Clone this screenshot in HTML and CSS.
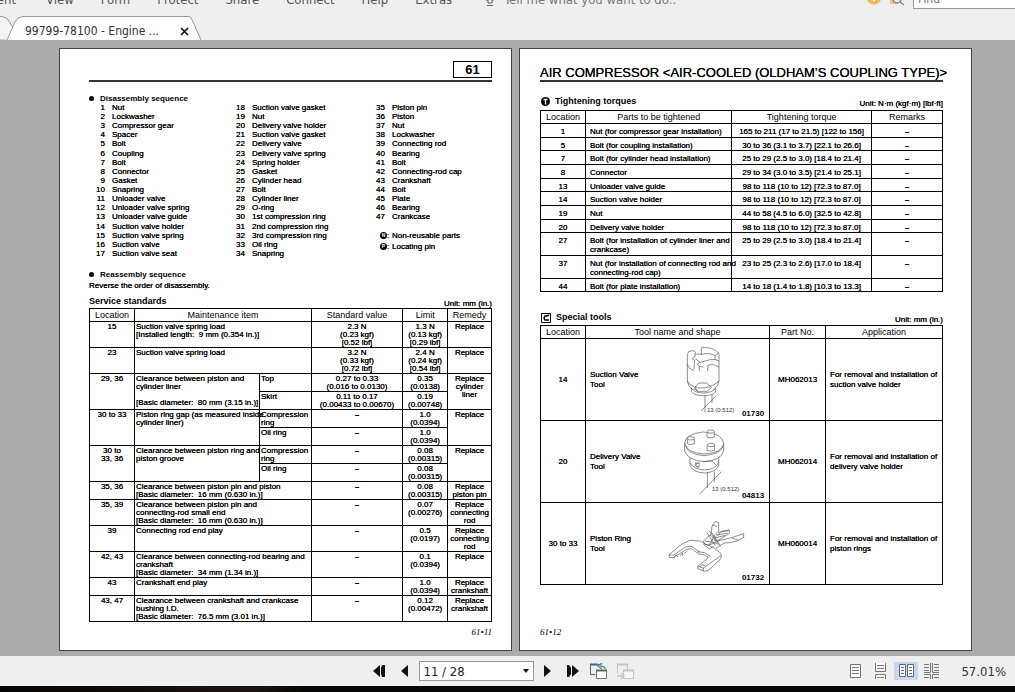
FILE: index.html
```html
<!DOCTYPE html>
<html lang="en">
<head>
<meta charset="utf-8">
<title>99799-78100 - Engine</title>
<link rel="stylesheet" href="styles.css">
</head>
<body>
<header class="menubar">
  <button class="menu first">Comment</button>
  <button class="menu">View</button>
  <button class="menu">Form</button>
  <button class="menu">Protect</button>
  <button class="menu">Share</button>
  <button class="menu">Connect</button>
  <button class="menu">Help</button>
  <button class="menu">Extras</button>
  <svg class="bulb" width="10" height="16" viewBox="0 0 10 16" fill="none" stroke="#666"><path d="M3 12V9H1l4-5 4 5H7v3zM2 14.500h6"/></svg>
  <span class="tell">Tell me what you want to do..</span>
  <span class="grow"></span>
  <svg class="tools-icon" width="36" height="16" viewBox="0 0 36 16" fill="none"><circle cx="8" cy="6" r="7.500" fill="#ecb65c"/><path d="M6 6l2 3 2-3" stroke="#fff" stroke-width="2"/><path d="M24 1h7v12h-7z" fill="#edc479"/><circle cx="31" cy="8" r="4" fill="#efefef" stroke="#888" stroke-width="1.500"/><path d="M34 11l4 3" stroke="#888" stroke-width="1.500"/></svg>
  <input class="find" type="text" value="Find" aria-label="Find">
</header>
<nav class="tabs">
  <svg class="tab-prev" width="15" height="24" viewBox="0 0 15 24"><path d="M-1 24V.5h3q5 0 8 6l5 9v9z" fill="#f4f4f4" stroke="#999"/></svg>
  <div class="tab">
    <svg width="16" height="24" viewBox="0 0 16 24"><path d="M0 24L8 6q3-5.500 8-5.500V24z" fill="#fff"/><path d="M0 24L8 6q3-5.500 8-5.500" fill="none" stroke="#999"/></svg>
    <span class="tab-name">99799-78100 - Engine ...</span>
    <button class="close" aria-label="Close tab"><svg width="9" height="9" viewBox="0 0 9 9"><path d="M1 1l7 7M8 1L1 8" stroke="#111" stroke-width="1.700"/></svg></button>
    <svg width="12" height="24" viewBox="0 0 12 24"><path d="M12 24L4 6Q2 .5 0 .5V24z" fill="#fff"/><path d="M12 24L4 6Q2 .5 0 .5" fill="none" stroke="#999"/></svg>
  </div>
</nav>
<main class="viewer">
  <article class="page left-page">
    <div class="page-head"><span class="chapter">61</span></div>
    <h3 class="bullet first-bullet">Disassembly sequence</h3>
    <div class="parts">
      <ul class="parts-col">
        <li><b>1</b>Nut</li><li><b>2</b>Lockwasher</li><li><b>3</b>Compressor gear</li><li><b>4</b>Spacer</li><li><b>5</b>Bolt</li><li><b>6</b>Coupling</li><li><b>7</b>Bolt</li><li><b>8</b>Connector</li><li><b>9</b>Gasket</li><li><b>10</b>Snapring</li><li><b>11</b>Unloader valve</li><li><b>12</b>Unloader valve spring</li><li><b>13</b>Unloader valve guide</li><li><b>14</b>Suction valve holder</li><li><b>15</b>Suction valve spring</li><li><b>16</b>Suction valve</li><li><b>17</b>Suction valve seat</li>
      </ul>
      <ul class="parts-col">
        <li><b>18</b>Suction valve gasket</li><li><b>19</b>Nut</li><li><b>20</b>Delivery valve holder</li><li><b>21</b>Suction valve gasket</li><li><b>22</b>Delivery valve</li><li><b>23</b>Delivery valve spring</li><li><b>24</b>Spring holder</li><li><b>25</b>Gasket</li><li><b>26</b>Cylinder head</li><li><b>27</b>Bolt</li><li><b>28</b>Cylinder liner</li><li><b>29</b>O-ring</li><li><b>30</b>1st compression ring</li><li><b>31</b>2nd compression ring</li><li><b>32</b>3rd compression ring</li><li><b>33</b>Oil ring</li><li><b>34</b>Snapring</li>
      </ul>
      <div class="parts-last">
        <ul class="parts-col">
          <li><b>35</b>Piston pin</li><li><b>36</b>Piston</li><li><b>37</b>Nut</li><li><b>38</b>Lockwasher</li><li><b>39</b>Connecting rod</li><li><b>40</b>Bearing</li><li><b>41</b>Bolt</li><li><b>42</b>Connecting-rod cap</li><li><b>43</b>Crankshaft</li><li><b>44</b>Bolt</li><li><b>45</b>Plate</li><li><b>46</b>Bearing</li><li><b>47</b>Crankcase</li>
        </ul>
        <p class="legend"><i class="dot">N</i><span>:</span>Non-reusable parts</p>
        <p class="legend"><i class="dot">P</i><span>:</span>Locating pin</p>
      </div>
    </div>
    <h3 class="bullet">Reassembly sequence</h3>
    <p class="note">Reverse the order of disassembly.</p>
    <div class="caption"><h2>Service standards</h2><span>Unit: mm (in.)</span></div>
    <table class="sheet service">
      <colgroup><col class="s1"><col class="s2"><col class="s3"><col class="s4"><col class="s5"><col class="s6"></colgroup>
      <thead><tr><th>Location</th><th colspan="2">Maintenance item</th><th>Standard value</th><th>Limit</th><th>Remedy</th></tr></thead>
      <tbody>
        <tr><td>15</td><td class="txt" colspan="2">Suction valve spring load<br>[Installed length:&nbsp; 9 mm (0.354 in.)]</td><td>2.3 N<br>(0.23 kgf)<br>[0.52 lbf]</td><td>1.3 N<br>(0.13 kgf)<br>[0.29 lbf]</td><td>Replace</td></tr>
        <tr><td>23</td><td class="txt" colspan="2">Suction valve spring load</td><td>3.2 N<br>(0.33 kgf)<br>[0.72 lbf]</td><td>2.4 N<br>(0.24 kgf)<br>[0.54 lbf]</td><td>Replace</td></tr>
        <tr><td rowspan="2">29, 36</td><td class="txt" rowspan="2">Clearance between piston and<br>cylinder liner<br><br>[Basic diameter:&nbsp; 80 mm (3.15 in.)]</td><td class="txt">Top</td><td>0.27 to 0.33<br>(0.016 to 0.0130)</td><td>0.35<br>(0.0138)</td><td rowspan="2">Replace<br>cylinder<br>liner</td></tr>
        <tr><td class="txt">Skirt</td><td>0.11 to 0.17<br>(0.00433 to 0.00670)</td><td>0.19<br>(0.00748)</td></tr>
        <tr><td rowspan="2">30 to 33</td><td class="txt" rowspan="2">Piston ring gap (as measured inside<br>cylinder liner)</td><td class="txt">Compression<br>ring</td><td class="dash">–</td><td>1.0<br>(0.0394)</td><td rowspan="2">Replace</td></tr>
        <tr><td class="txt">Oil ring</td><td class="dash">–</td><td>1.0<br>(0.0394)</td></tr>
        <tr><td rowspan="2">30 to<br>33, 36</td><td class="txt" rowspan="2">Clearance between piston ring and<br>piston groove</td><td class="txt">Compression<br>ring</td><td class="dash">–</td><td>0.08<br>(0.00315)</td><td rowspan="2">Replace</td></tr>
        <tr><td class="txt">Oil ring</td><td class="dash">–</td><td>0.08<br>(0.00315)</td></tr>
        <tr><td>35, 36</td><td class="txt" colspan="2">Clearance between piston pin and piston<br>[Basic diameter:&nbsp; 16 mm (0.630 in.)]</td><td class="dash">–</td><td>0.08<br>(0.00315)</td><td>Replace<br>piston pin</td></tr>
        <tr><td>35, 39</td><td class="txt" colspan="2">Clearance between piston pin and<br>connecting-rod small end<br>[Basic diameter:&nbsp; 16 mm (0.630 in.)]</td><td class="dash">–</td><td>0.07<br>(0.00276)</td><td>Replace<br>connecting<br>rod</td></tr>
        <tr><td>39</td><td class="txt" colspan="2">Connecting rod end play</td><td class="dash">–</td><td>0.5<br>(0.0197)</td><td>Replace<br>connecting<br>rod</td></tr>
        <tr><td>42, 43</td><td class="txt" colspan="2">Clearance between connecting-rod bearing and<br>crankshaft<br>[Basic diameter:&nbsp; 34 mm (1.34 in.)]</td><td class="dash">–</td><td>0.1<br>(0.0394)</td><td>Replace</td></tr>
        <tr><td>43</td><td class="txt" colspan="2">Crankshaft end play</td><td class="dash">–</td><td>1.0<br>(0.0394)</td><td>Replace<br>crankshaft</td></tr>
        <tr><td>43, 47</td><td class="txt" colspan="2">Clearance between crankshaft and crankcase<br>bushing I.D.<br>[Basic diameter:&nbsp; 76.5 mm (3.01 in.)]</td><td class="dash">–</td><td>0.12<br>(0.00472)</td><td>Replace<br>crankshaft</td></tr>
      </tbody>
    </table>
    <footer class="folio end">61•11</footer>
  </article>

  <article class="page right-page">
    <div class="page-head"><h1>AIR COMPRESSOR &lt;AIR-COOLED (OLDHAM’S COUPLING TYPE)&gt;</h1></div>
    <div class="caption torque-cap">
      <h2><svg width="9" height="9" viewBox="0 0 9 9"><circle cx="4.500" cy="4.500" r="4.500" fill="#000"/><path d="M2.500 2.500h4M4.500 2.500v5" stroke="#fff" stroke-width="1.300"/></svg>Tightening torques</h2>
      <span>Unit: N·m (kgf·m) [lbf·ft]</span>
    </div>
    <table class="sheet torques">
      <colgroup><col class="s1"><col class="t2"><col class="t3"><col class="t4"></colgroup>
      <thead><tr><th>Location</th><th>Parts to be tightened</th><th>Tightening torque</th><th>Remarks</th></tr></thead>
      <tbody>
        <tr><td>1</td><td class="txt">Nut (for compressor gear installation)</td><td>165 to 211 (17 to 21.5) [122 to 156]</td><td class="dash">–</td></tr>
        <tr><td>5</td><td class="txt">Bolt (for coupling installation)</td><td>30 to 36 (3.1 to 3.7) [22.1 to 26.6]</td><td class="dash">–</td></tr>
        <tr><td>7</td><td class="txt">Bolt (for cylinder head installation)</td><td>25 to 29 (2.5 to 3.0) [18.4 to 21.4]</td><td class="dash">–</td></tr>
        <tr><td>8</td><td class="txt">Connector</td><td>29 to 34 (3.0 to 3.5) [21.4 to 25.1]</td><td class="dash">–</td></tr>
        <tr><td>13</td><td class="txt">Unloader valve guide</td><td>98 to 118 (10 to 12) [72.3 to 87.0]</td><td class="dash">–</td></tr>
        <tr><td>14</td><td class="txt">Suction valve holder</td><td>98 to 118 (10 to 12) [72.3 to 87.0]</td><td class="dash">–</td></tr>
        <tr><td>19</td><td class="txt">Nut</td><td>44 to 58 (4.5 to 6.0) [32.5 to 42.8]</td><td class="dash">–</td></tr>
        <tr><td>20</td><td class="txt">Delivery valve holder</td><td>98 to 118 (10 to 12) [72.3 to 87.0]</td><td class="dash">–</td></tr>
        <tr><td>27</td><td class="txt">Bolt (for installation of cylinder liner and<br>crankcase)</td><td>25 to 29 (2.5 to 3.0) [18.4 to 21.4]</td><td class="dash">–</td></tr>
        <tr><td>37</td><td class="txt">Nut (for installation of connecting rod and<br>connecting-rod cap)</td><td>23 to 25 (2.3 to 2.6) [17.0 to 18.4]</td><td class="dash">–</td></tr>
        <tr><td>44</td><td class="txt">Bolt (for plate installation)</td><td>14 to 18 (1.4 to 1.8) [10.3 to 13.3]</td><td class="dash">–</td></tr>
      </tbody>
    </table>
    <div class="caption tools-cap">
      <h2><svg width="10" height="10" viewBox="0 0 10 10"><path d="M.5.5h9v9h-9z" fill="#fff" stroke="#000"/><path d="M8 2L6 3H4L3 5l1 2h4" fill="none" stroke="#000" stroke-width="1.500"/></svg>Special tools</h2>
      <span>Unit: mm (in.)</span>
    </div>
    <table class="sheet special">
      <colgroup><col class="s1"><col class="p2"><col class="p3"><col class="p4"></colgroup>
      <thead><tr><th>Location</th><th>Tool name and shape</th><th>Part No.</th><th>Application</th></tr></thead>
      <tbody>
        <tr><td>14</td><td class="shape"><div class="tool"><span class="tool-name">Suction Valve<br>Tool</span>
          <svg class="drawing" viewBox="48 87 228 240">
            <path d="M112 130V210Q114 228 128 235M207 128V210Q204 226 192 235M112 130Q113 120 126 119Q135 118 136 124L135 137Q128 138 127 143L134 148L132 174M112 160Q114 170 124 175L133 178M154 130V110Q190 107 206 126L195 134Q180 124 154 130M207 150Q198 143 180 146L147 155Q138 159 148 166L160 168M148 166V180M207 168L190 161L174 162L173 180M136 130Q143 128 154 130M136 143L150 154M195 134V148M112 210Q118 224 145 231Q180 234 207 210M124 231V242Q134 254 158 254Q188 254 197 243V231M124 231Q135 246 160 246Q188 245 197 231M135 229L144 245M146 216L132 233L146 241H172L184 229L170 216z"/>
            <path d="M165 254V305M186 252V276M153 300L197 256"/>
            <text x="171" y="304">13 (0.512)</text>
          </svg><span class="fig">01730</span></div></td><td>MH062013</td><td class="txt">For removal and installation of<br>suction valve holder</td></tr>
        <tr><td>20</td><td class="shape"><div class="tool"><span class="tool-name">Delivery Valve<br>Tool</span>
          <svg class="drawing" viewBox="48 333 228 240">
            <path d="M104 396Q106 368 160 363Q218 366 221 398Q218 426 162 429Q108 425 104 396V420Q112 447 162 452Q214 448 221 420V398M107 403Q112 430 162 434Q212 430 219 405M120 440V464Q130 485 164 486Q198 484 206 463V440M120 456Q133 476 164 477Q195 476 206 455M158 452L186 450L198 462M150 456L136 456V464L148 470"/>
            <path d="M171 364V378Q181 384 193 378V364M112 384V398Q121 404 133 398V384M171 403V418Q182 423 194 418V403" fill="#fff"/>
            <ellipse cx="182" cy="362" rx="11" ry="5"/><ellipse cx="122" cy="382" rx="11" ry="5"/><ellipse cx="183" cy="402" rx="11" ry="5"/><ellipse cx="143" cy="462" rx="5" ry="6"/>
            <path d="M172 486V531M193 482V513M149 549L214 482"/>
            <text x="186" y="539">13 (0.512)</text>
          </svg><span class="fig">04813</span></div></td><td>MH062014</td><td class="txt">For removal and installation of<br>delivery valve holder</td></tr>
        <tr><td>30 to 33</td><td class="shape"><div class="tool"><span class="tool-name">Piston Ring<br>Tool</span>
          <svg class="drawing" viewBox="48 579 228 240">
            <path d="M57 731L96 699L120 688L150 690L164 698L192 711L214 728L213 742L177 777L164 781L143 773V766L171 744L174 738L160 731L146 729L124 713L108 716L70 740L58 739zM57 731L70 733L106 708L126 706L146 722L163 725L181 736M143 766L160 771L213 734M160 771V781"/>
            <path d="M160 690L184 668L186 646L197 631L206 635V660L194 672L178 702L164 700zM176 703L206 689L230 684L250 678L281 668V680L260 690L242 695L222 696L198 712M196 678L215 661L238 657V667L212 684L194 690zM170 664L196 704M178 660L204 698M186 666L212 706M160 700L178 714L190 706M204 664L236 659M200 672L234 666M198 680L226 673M188 642L200 646M164 690L188 694L206 700"/>
            <path d="M72 740L78 731L84 738M90 734L98 727V735M102 728L112 720M146 718V726M150 768L156 761L166 764M180 672L192 682L184 690M246 682L264 686"/>
          </svg><span class="fig">01732</span></div></td><td>MH060014</td><td class="txt">For removal and installation of<br>piston rings</td></tr>
      </tbody>
    </table>
    <footer class="folio">61•12</footer>
  </article>
</main>
<footer class="statusbar">
  <span></span>
  <div class="pager">
    <button class="jump-first" aria-label="First page"><svg width="13" height="14" viewBox="0 0 13 14"><path d="M7 1v12L0 7zM8 4l1-3h3v12H9l-1-3z" fill="#111"/></svg></button>
    <button aria-label="Previous page"><svg width="8" height="14" viewBox="0 0 8 14"><path d="M7 1v12L0 7z" fill="#111"/></svg></button>
    <div class="page-box"><select aria-label="Page"><option>11 / 28</option></select><svg width="6" height="4" viewBox="0 0 6 4"><path d="M0 0h6L3 4z" fill="#111"/></svg></div>
    <button aria-label="Next page"><svg width="8" height="14" viewBox="0 0 8 14"><path d="M0 1v12l7-6z" fill="#111"/></svg></button>
    <button class="jump-last" aria-label="Last page"><svg width="13" height="14" viewBox="0 0 13 14"><path d="M0 1h2l2 3v6l-2 3H0zM5 1l7 6-7 6z" fill="#111"/></svg></button>
    <button aria-label="Previous view"><svg width="17" height="17" viewBox="0 0 17 17" fill="none"><path d="M5.500 11.500h-5v-10h11" stroke="#4a6484"/><path d="M0 1.500h8" stroke="#4a6484" stroke-width="2"/><path d="M6.500 7.500h10v8h-10z" fill="#fff" stroke="#777"/><path d="M6 7.500h11" stroke="#666" stroke-width="2"/><path d="M15 6q0-3-5-3M12 0L8 3l4 3" stroke="#4d9a80" stroke-width="1.500"/></svg></button>
    <button aria-label="Next view"><svg width="17" height="17" viewBox="0 0 17 17" fill="none" opacity=".5"><path d="M.5 10V1.500h10v5" stroke="#8aa0b4"/><path d="M0 1.500h11" stroke="#8aa0b4" stroke-width="2"/><path d="M6.500 7.500h10v8h-10z" fill="#fff" stroke="#999"/><path d="M6 7.500h11" stroke="#8aa0b4" stroke-width="2"/><path d="M0 13h7M4 10l3 3-3 3" stroke="#7fae9c" stroke-width="1.500"/></svg></button>
  </div>
  <div class="modes">
    <button aria-label="Single page"><svg width="11" height="14" viewBox="0 0 11 14" fill="none" stroke="#777"><path d="M.5.5h10v13H.5z" fill="#fff"/><path d="M2 3.500h7M2 6.500h7M2 9.500h7"/></svg></button>
    <button aria-label="Continuous"><svg width="11" height="16" viewBox="0 0 11 16" fill="none" stroke="#777"><path d="M.5 0v8.500h10V0M.5 16v-4.500h10V16" fill="#fff"/><path d="M2 2.500h7M2 5.500h7M2 14.500h7"/></svg></button>
    <button class="on" aria-label="Facing"><svg width="15" height="14" viewBox="0 0 15 14" fill="none" stroke="#667"><path d="M.5.5h6v12h-6zM8.500.5h6v12h-6z" fill="#fff"/><path d="M2 3.500h3M2 6.500h3M2 9.500h3M10 3.500h3M10 6.500h3M10 9.500h3"/></svg></button>
    <button aria-label="Continuous facing"><svg width="15" height="16" viewBox="0 0 15 16" fill="none" stroke="#777"><path d="M0 9.500h6.500V0M15 9.500H8.500V0M0 11.500h6.500V16M15 11.500H8.500V16"/><path d="M0 1.500h5M0 4.500h5M0 7.500h5M10 1.500h5M10 4.500h5M10 7.500h5M0 14.500h5M10 14.500h5"/></svg></button>
    <span class="zoom">57.01%</span>
  </div>
</footer>
<div class="desk"></div>
</body>
</html>
```
FILE: styles.css
```css
* { box-sizing: border-box; }
body {
  margin: 0;
  min-height: 100vh;
  display: flex;
  flex-direction: column;
  overflow: hidden;
  background: #efefef;
  color: #444;
  font-family: "DejaVu Sans Condensed", "DejaVu Sans", sans-serif;
  font-size: 13px;
}
button { border: 0; padding: 0; background: none; font: inherit; color: inherit; display: flex; align-items: center; }
svg { display: block; flex: none; }

/* Menu bar, scrolled partly above the window's top edge */
.menubar { display: flex; align-items: center; gap: 27px; height: 16px; margin-top: -9px; }
.menubar > * { flex: none; }
.menu { color: #555; }
.menu.first { width: 16px; justify-content: flex-end; margin-right: 3px; }
.bulb { margin-left: 6px; }
.tell { margin-left: -18px; color: #777; }
.menubar .grow { flex: 1; }
.tools-icon { margin-right: -16px; overflow: visible; }
.find { width: 102px; height: 20px; padding: 0 4px; border: 1px solid #999; border-right: 0; background: #fff; font: inherit; font-size: 12px; color: #777; }

.tabs { display: flex; align-items: flex-end; height: 33px; }
.tab-prev { margin-right: -8px; }
.tab { display: flex; align-items: stretch; height: 24px; position: relative; }
.tab-name, .close { background: #fff; border-top: 1px solid #999; display: flex; align-items: center; }
.tab-name { font-size: 12px; color: #333; padding: 5px 0 0 2px; min-width: 155px; }
.close { padding: 6px 0 0 2px; width: 11px; }

.viewer {
  flex: 1;
  display: flex;
  gap: 7px;
  padding: 8px 43px 5px 59px;
  background: #ababab;
  color: #000;
  font: 8px/8px "Liberation Sans", Arial, sans-serif;
  text-shadow: 0 0 0 #000;
}
.page { flex: 1; min-width: 0; background: #fff; border: 1px solid #444; display: flex; flex-direction: column; }
.left-page { padding: 12px 19px 0 29px; }
.right-page { padding: 12px 28px 0 20px; }
h1, h2, h3, p, ul { margin: 0; padding: 0; font-weight: bold; }
h2, h3, .chapter, .fig, .folio { text-shadow: none; }
.page-head { height: 21px; flex: none; border-bottom: 2px solid #333; display: flex; align-items: flex-start; justify-content: flex-end; }
.chapter { width: 39px; border: 1px solid #000; text-align: center; font-size: 13px; line-height: 15px; font-weight: bold; }
h1 { flex: 1; min-width: 0; font-size: 13px; font-weight: normal; line-height: 23px; white-space: nowrap; }

.bullet { display: flex; align-items: center; gap: 6px; font-size: 8px; line-height: 9px; margin-top: 12px; }
.bullet::before { content: ""; width: 5px; height: 5px; border-radius: 50%; background: #000; }
.parts { display: grid; grid-template-columns: 140px 140px 1fr; }
.parts-col { list-style: none; font-weight: normal; line-height: 9px; }
.parts-col li { display: flex; gap: 7px; }
.parts-col li:nth-child(8n+6) { padding-top: 1px; }
.parts-col b { width: 16px; text-align: right; font-weight: normal; }
.legend { display: flex; align-items: center; font-weight: normal; line-height: 11px; padding-left: 11px; }
.parts-last .parts-col { margin-bottom: 9px; }
.dot { width: 7px; height: 7px; border-radius: 50%; background: #000; color: #fff; font: bold 5px/7px "Liberation Sans", Arial, sans-serif; text-align: center; text-shadow: none; }
.legend span { width: 5px; }
.note { font-weight: normal; line-height: 9px; margin-top: 2px; }
.caption { display: flex; justify-content: space-between; align-items: flex-end; line-height: 9px; }
.caption h2 { display: flex; align-items: center; gap: 5px; font-size: 9px; line-height: 13px; }
.left-page .caption { margin-top: 5px; }
.torque-cap { margin-top: 13px; padding: 0 0 2px 1px; }
.tools-cap { margin-top: 19px; padding: 0 0 1px 1px; }

.sheet { width: 100%; border-collapse: collapse; table-layout: fixed; text-align: center; }
.sheet th { border: 1px solid #000; padding: 0; font-size: 9px; font-weight: normal; line-height: 12px; height: 13px; text-shadow: none; }
.sheet td { border: 1px solid #000; padding: 1px 0 0; vertical-align: top; white-space: nowrap; }
.sheet .txt { text-align: left; padding-left: 2px; }
.sheet .dash { font-weight: bold; }
.s1 { width: 11.200%; }
.s2 { width: 31.100%; }
.s3 { width: 12.900%; }
.s4 { width: 22.700%; }
.s5 { width: 11.200%; }
.t2 { width: 36.400%; }
.t3 { width: 34.700%; }
.p2 { width: 45.800%; }
.p3 { width: 13.900%; }
.service .txt { padding-left: 1px; }
.torques td { padding: 3px 0 1px; line-height: 9px; }
.torques tr:nth-child(3n+2) td { padding-bottom: 0; }
.torques .txt, .special .txt { padding-left: 4px; }
.special td { padding: 0; height: 82px; vertical-align: middle; line-height: 10px; }
.tool { display: flex; align-items: center; padding: 0 5px 0 4px; }
.tool-name { flex: 1; text-align: left; }
.drawing { width: 76px; height: 80px; overflow: visible; fill: none; stroke: #555; stroke-width: 2px; text-shadow: none; }
.drawing text { font-size: 18px; fill: #333; stroke: none; }
.fig { align-self: flex-end; font-weight: bold; line-height: 12px; }
.folio { font: italic 9px/12px "Liberation Serif", "Times New Roman", serif; margin-top: 4px; }
.right-page .folio { margin: auto 0 12px; }
.end { text-align: right; }

.statusbar { display: grid; grid-template-columns: 1fr auto 1fr; align-items: center; height: 30px; padding-right: 9px; }
.pager { display: flex; align-items: center; gap: 10px; }
.jump-first { margin-right: 5px; }
.jump-last { margin-left: 5px; }
.page-box { position: relative; width: 115px; height: 20px; }
.page-box select { appearance: none; width: 100%; height: 100%; padding: 0 4px; border: 1px solid #999; border-radius: 0; background: #fff; color: #222; font: inherit; }
.page-box svg { position: absolute; right: 5px; top: 8px; }
.modes { display: flex; align-items: center; justify-content: flex-end; gap: 10px; }
.modes button { min-width: 15px; justify-content: center; }
.modes .on { background: #c5d8f0; width: 24px; height: 18px; margin: 0 -4px; }
.zoom { margin-left: 12px; color: #333; }
.desk { height: 6px; background: linear-gradient(90deg, #050505, #1a1411 25%, #070707 30%); }
```
